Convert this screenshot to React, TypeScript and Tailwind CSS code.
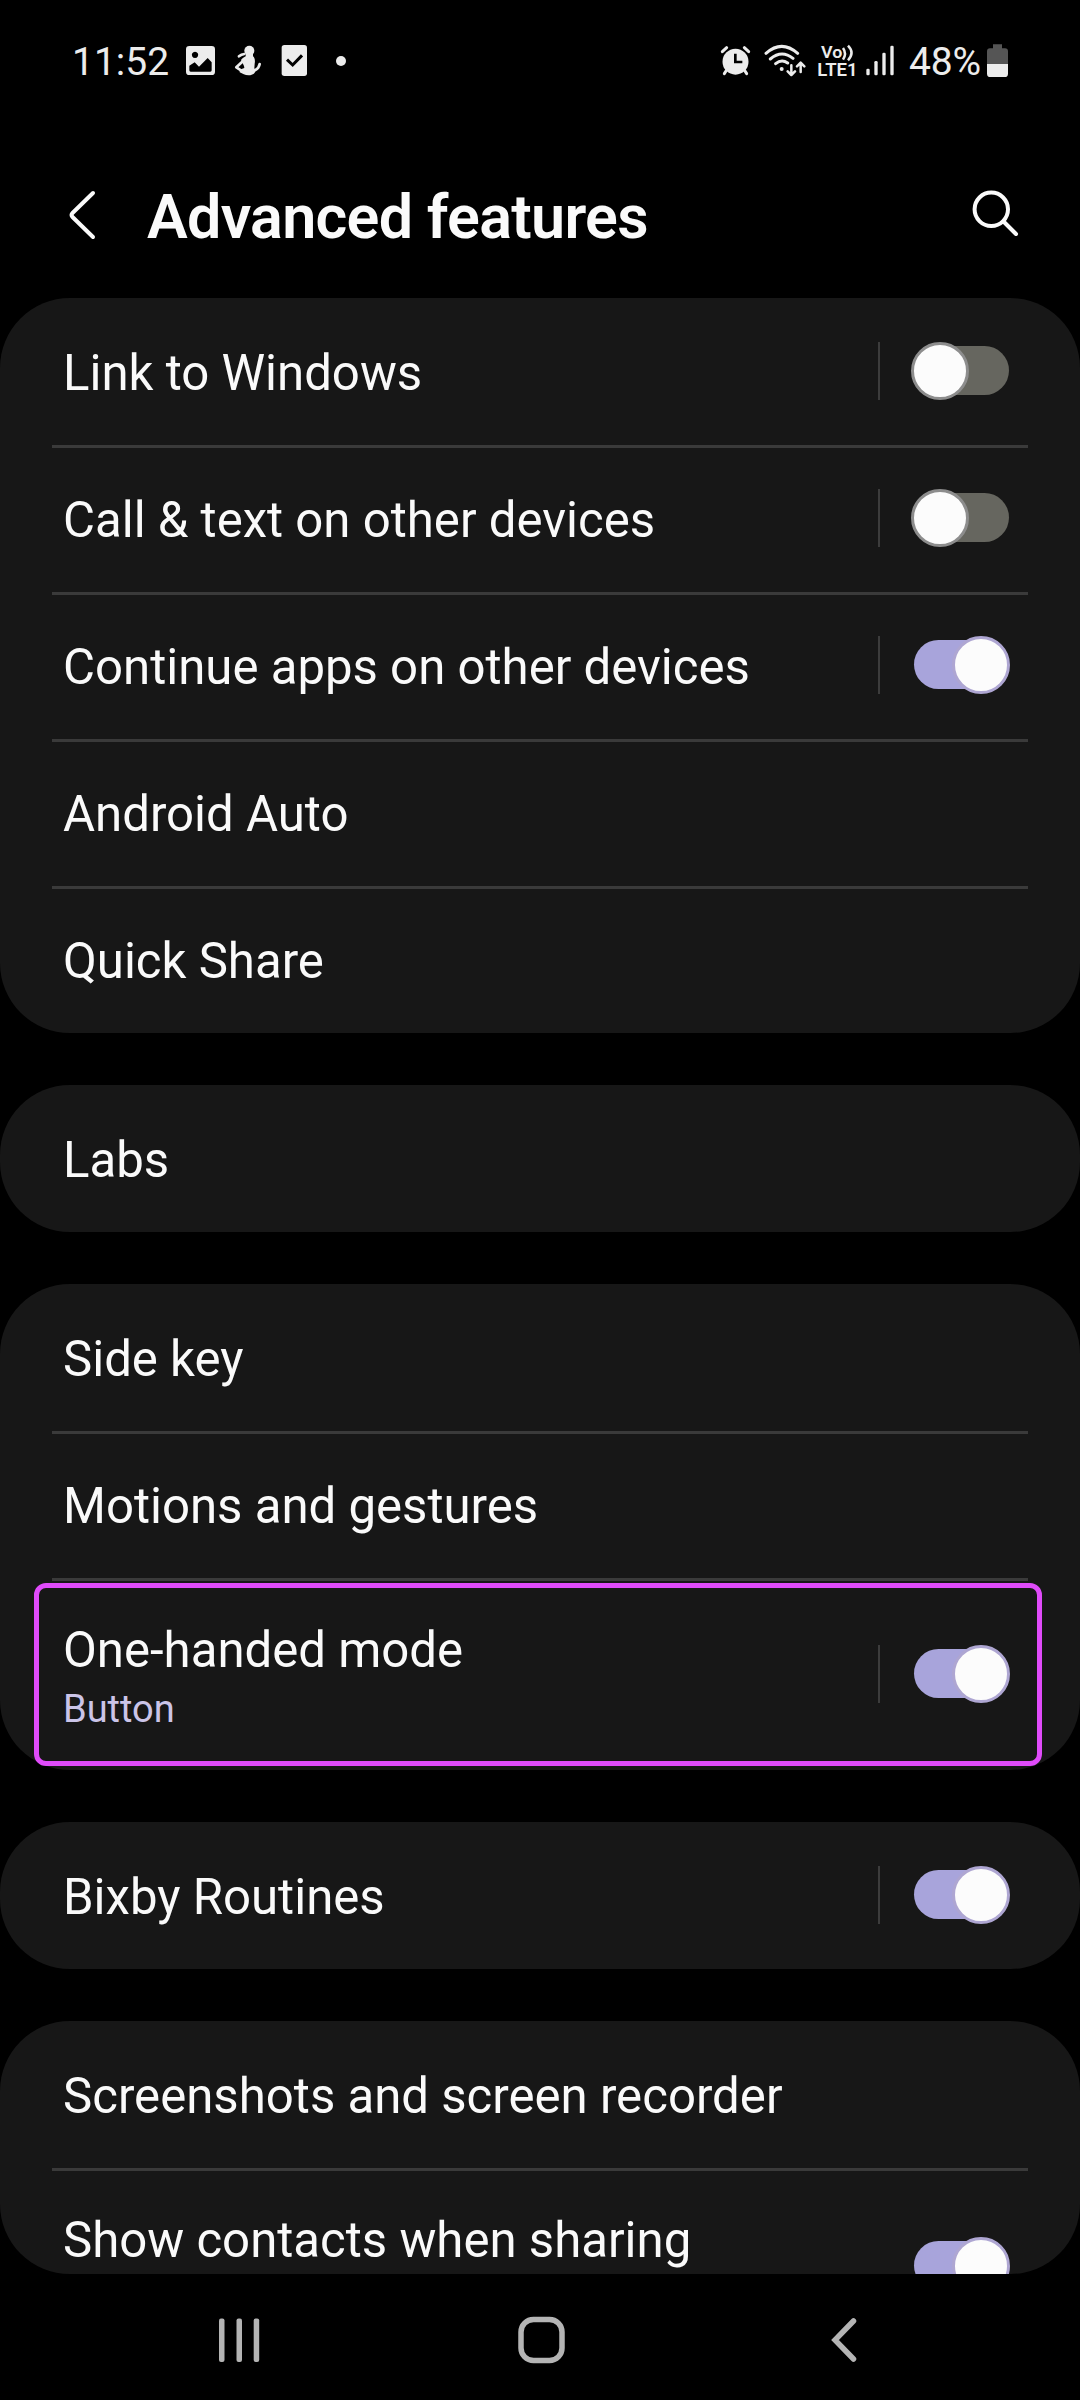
import clsx from "clsx";

type Setting = {
    title: string;
    subtitle?: string;
    enabled?: boolean;
    clipped?: boolean;
    highlighted?: boolean;
};

const groups: Setting[][] = [
    [
        { title: "Link to Windows", enabled: false },
        { title: "Call & text on other devices", enabled: false },
        { title: "Continue apps on other devices", enabled: true },
        { title: "Android Auto" },
        { title: "Quick Share" },
    ],
    [{ title: "Labs" }],
    [
        { title: "Side key" },
        { title: "Motions and gestures" },
        {
            title: "One-handed mode",
            subtitle: "Button",
            enabled: true,
            highlighted: true,
        },
    ],
    [{ title: "Bixby Routines", enabled: true }],
    [
        { title: "Screenshots and screen recorder" },
        { title: "Show contacts when sharing", enabled: true, clipped: true },
    ],
];

function StatusBar() {
    return (
        <div className="flex h-[121px] shrink-0 items-center pr-[72px] pl-[72px] text-[#ececec]">
            <span className="mt-[4px] w-[114px] text-[39px] leading-none whitespace-nowrap">
                11:52
            </span>
            {/* Gallery */}
            <svg className="h-[33px] w-[29px]" viewBox="408 72 87 99">
                <path
                    fill="currentColor"
                    fillRule="evenodd"
                    d="M418 78h67q10 0 10 10v67q0 10-10 10h-67q-10 0-10-10V88q0-10 10-10ZM435 95a9.500 9.500 0 1 0 .1 0ZM418 137v14q0 4 4 4h59q4 0 4-4v-24l-12-13-26 26-13-13Z"
                />
            </svg>
            {/* Assistant figure */}
            <svg
                className="ml-[19px] h-[33px] w-[28px]"
                viewBox="552 72 84 99"
                fill="none"
                stroke="currentColor"
                strokeWidth="8"
                strokeLinecap="round"
                strokeLinejoin="round"
            >
                <g fill="currentColor" stroke="none">
                    <circle cx="598" cy="92" r="15" />
                    <path d="M587 100h22v9c5 4 7 12 5 22l-1 14c6 4 4 21-17 21-12 0-18-6-27-9v-8l14-5c0-9-6-14-7-19l-3-5c4-6 9-8 14-11Z" />
                </g>
                <path d="M567 109q7-6 16-7M580 122l-21 20 14 9M608 156c6-8 18-5 21-24" />
            </svg>
            {/* Tasks */}
            <svg className="ml-[19px] h-[33px] w-[27px]" viewBox="693 72 81 99">
                <rect
                    x="695"
                    y="75"
                    width="76"
                    height="93"
                    rx="8"
                    fill="currentColor"
                />
                <path
                    d="M711 119l17 16 28-29"
                    fill="none"
                    stroke="#000"
                    strokeWidth="9"
                />
            </svg>
            <span className="ml-[28px] size-[10px] rounded-full bg-[#ececec]" />

            <div className="ml-auto flex items-center">
                {/* Alarm */}
                <svg className="h-[33px] w-[31px]" viewBox="60 72 93 99">
                    <circle cx="106.500" cy="125" r="39" fill="currentColor" />
                    <g
                        fill="none"
                        stroke="currentColor"
                        strokeWidth="9"
                        strokeLinecap="round"
                    >
                        <path d="M67 95l13-12M146 95l-13-12M80 150l-7 11M133 150l7 11" />
                        <path
                            stroke="#000"
                            strokeWidth="8"
                            strokeLinecap="butt"
                            d="M106 101v25h21"
                        />
                    </g>
                </svg>
                {/* Wi-Fi with data arrows */}
                <svg
                    className="ml-[13px] h-[33px] w-[42px]"
                    viewBox="192 72 126 99"
                    fill="none"
                    stroke="currentColor"
                    strokeWidth="9"
                    strokeLinecap="round"
                    strokeLinejoin="round"
                >
                    <path d="M198 100Q245 58 293 100M211 117Q245 88 279 115M227 131Q245 116 263 129" />
                    <circle
                        cx="245"
                        cy="147"
                        r="6"
                        fill="currentColor"
                        stroke="none"
                    />
                    <path
                        strokeWidth="7.500"
                        d="M274 136v28M263 154l11 11 11-11M302 156v-27M291 139l11-11 11 11"
                    />
                </svg>
                {/* VoLTE */}
                <svg
                    className="ml-[11px] h-[33px] w-[40px] overflow-visible"
                    viewBox="351 72 120 99"
                    fill="currentColor"
                >
                    <text
                        x="363"
                        y="113"
                        fontSize="51"
                        fontWeight="600"
                        textLength="64"
                        lengthAdjust="spacingAndGlyphs"
                    >
                        Vo
                    </text>
                    <path
                        d="M429 84q12 17 0 35M444 77q21 21 0 44"
                        fill="none"
                        stroke="currentColor"
                        strokeWidth="7.500"
                    />
                    <text
                        x="352"
                        y="167"
                        fontSize="54"
                        fontWeight="600"
                        textLength="121"
                        lengthAdjust="spacingAndGlyphs"
                    >
                        LTE1
                    </text>
                </svg>
                {/* Signal */}
                <svg
                    className="ml-[9px] h-[33px] w-[28px]"
                    viewBox="498 72 84 99"
                    fill="currentColor"
                >
                    <rect x="499" y="146" width="10" height="20" rx="4" />
                    <rect x="523" y="123" width="10" height="43" rx="4" />
                    <rect x="547" y="98" width="10" height="68" rx="4" />
                    <rect x="571" y="77" width="10" height="89" rx="4" />
                </svg>
                <span className="mt-[4px] ml-[15px] w-[78px] text-[39px] leading-none tracking-[-0.2px] whitespace-nowrap">
                    48%
                </span>
                {/* Battery */}
                <svg className="h-[33px] w-[21px]" viewBox="861 72 63 99">
                    <path
                        fill="#555"
                        d="M879 73h27v12h9q9 0 9 9v38h-63V94q0-9 9-9h9Z"
                    />
                    <path
                        fill="currentColor"
                        d="M861 132h63v29q0 10-10 10h-43q-10 0-10-10Z"
                    />
                </svg>
            </div>
        </div>
    );
}

function Header() {
    return (
        <header className="flex h-[177px] shrink-0 items-center pt-[11px] pr-[60px] pl-[66px]">
            <svg
                className="h-[52px] w-[30px]"
                viewBox="0 0 30 52"
                fill="none"
                stroke="#fafafa"
                strokeWidth="4"
                strokeLinecap="round"
            >
                <path d="M27 4L6.500 24q-2 2 0 4L27 48" />
            </svg>
            <h1 className="mt-[4px] ml-[51px] text-[61px] leading-[70px] font-semibold tracking-[-0.7px] whitespace-nowrap">
                Advanced features
            </h1>
            <svg
                className="ml-auto size-[50px]"
                viewBox="0 0 50 50"
                fill="none"
                stroke="#fafafa"
                strokeWidth="4"
                strokeLinecap="round"
            >
                <circle cx="21.300" cy="19.300" r="16.700" />
                <path d="M33.500 31.500L46 44" />
            </svg>
        </header>
    );
}

function Toggle({ enabled }: { enabled: boolean }) {
    return (
        <div
            role="switch"
            aria-checked={enabled}
            className={clsx(
                "flex h-[49px] w-[95px] items-start rounded-full",
                enabled ? "justify-end bg-[#a8a4db]" : "bg-[#66665f]",
            )}
        >
            <span
                className={clsx(
                    "-mt-1 size-[58px] shrink-0 rounded-full border-3 bg-[#fcfcfc]",
                    enabled
                        ? "-mr-px border-[#aea6d2]"
                        : "-ml-[3px] border-[#8d8d8d]",
                )}
            />
        </div>
    );
}

function SettingRow({ setting, first }: { setting: Setting; first: boolean }) {
    const { title, subtitle, enabled, clipped, highlighted } = setting;

    // Rows with a second line are taller and sit slightly higher
    const getRowSize = () => {
        if (clipped) return "h-[196px] pb-px";
        if (subtitle) return "h-[192px] pb-px";
        return "h-[147px] pb-[2px]";
    };

    const getTextOffset = () => {
        if (clipped) return "mb-[51px]";
        if (subtitle) return "pt-[8px]";
        return "pt-[5px]";
    };

    return (
        <div className="relative">
            {!first && (
                <div className="mx-[52px] -mb-[3px] h-[3px] bg-[#3a3a3a]" />
            )}
            <div
                className={clsx(
                    "flex items-center pr-[71px] pl-[63px]",
                    getRowSize(),
                )}
            >
                <div
                    className={clsx("flex-1 whitespace-nowrap", getTextOffset())}
                >
                    <div className="text-[49.15px] leading-[58px]">{title}</div>
                    {subtitle && (
                        <div className="mt-[5px] text-[38px] leading-[50px] text-[#cbc4e8]">
                            {subtitle}
                        </div>
                    )}
                </div>
                {enabled !== undefined && (
                    <>
                        {!clipped && (
                            <div className="mr-[34px] h-[58px] w-[2px] bg-[#3c3c3c]" />
                        )}
                        <Toggle enabled={enabled} />
                    </>
                )}
            </div>
            {highlighted && (
                <div className="absolute top-[5px] right-[38px] bottom-[4px] left-[34px] rounded-[12px] border-5 border-[#e04bfa]" />
            )}
        </div>
    );
}

function NavigationBar() {
    return (
        <nav className="flex h-[126px] shrink-0 items-center pt-[5px] pl-[216px] text-[#b4b4b4]">
            <svg
                className="h-[50px] w-[46px]"
                viewBox="0 0 46 50"
                fill="currentColor"
            >
                <rect x="3" y="3.500" width="5.500" height="43.500" rx="2" />
                <rect x="20.500" y="3.500" width="5.500" height="43.500" rx="2" />
                <rect x="37.700" y="3.500" width="5.500" height="43.500" rx="2" />
            </svg>
            <svg
                className="ml-[254px] size-[50px]"
                viewBox="0 0 50 50"
                fill="none"
                stroke="currentColor"
                strokeWidth="5.500"
            >
                <rect x="5" y="4.500" width="41" height="41" rx="12.500" />
            </svg>
            <svg
                className="ml-[260px] h-[50px] w-[34px]"
                viewBox="0 0 34 50"
                fill="none"
                stroke="currentColor"
                strokeWidth="5.500"
                strokeLinecap="round"
            >
                <path d="M27.500 6L9 25l18.500 19" />
            </svg>
        </nav>
    );
}

export default function App() {
    return (
        <div className="flex h-[2400px] w-[1080px] flex-col overflow-hidden bg-black font-['Roboto',sans-serif] text-[#fafafa]">
            <StatusBar />
            <Header />
            <main className="flex h-[1976px] shrink-0 flex-col gap-[52px] overflow-hidden rounded-b-[70px]">
                {groups.map((group, index) => (
                    <section
                        key={index}
                        className="shrink-0 rounded-[70px] bg-[#171717] last:rounded-b-none"
                    >
                        {group.map((setting, i) => (
                            <SettingRow
                                key={setting.title}
                                setting={setting}
                                first={i === 0}
                            />
                        ))}
                    </section>
                ))}
            </main>
            <NavigationBar />
        </div>
    );
}
